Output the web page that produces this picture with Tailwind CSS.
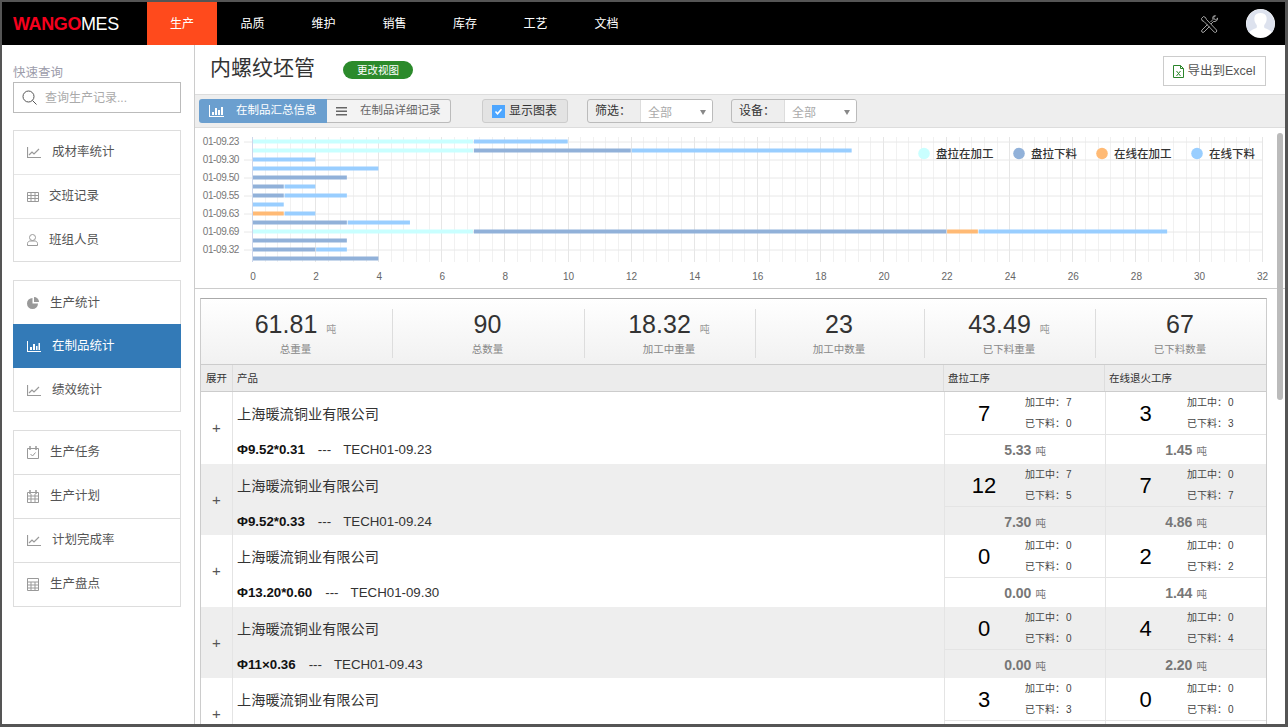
<!DOCTYPE html>
<html lang="en">
<head>
    <meta charset="UTF-8">
    <title>WANGOMES 在制品统计</title>
    <script src="https://cdn.jsdelivr.net/npm/@tailwindcss/browser@4"></script>
</head>
<body class="w-[1288px] h-[727px] overflow-hidden bg-white font-['Liberation_Sans','Noto_Sans_CJK_SC',sans-serif]">
<div class="w-[1288px] h-[727px] flex flex-col border-t-2 border-l-2 border-r-[3px] border-b-[3px] border-[#555]">

    <!-- top nav -->
    <header class="h-[43px] shrink-0 bg-black flex items-center text-white">
        <div class="w-[145px] pl-[11px] text-[18px] tracking-[-0.4px] leading-none"><span class="font-bold text-[#f5001d]">WANGO</span><span>MES</span></div>
        <nav class="flex h-full text-[12px]">
            <a class="w-[70px] flex items-center justify-center bg-[#ff4a1c]">生产</a>
            <a class="w-[71px] flex items-center justify-center">品质</a>
            <a class="w-[71px] flex items-center justify-center">维护</a>
            <a class="w-[71px] flex items-center justify-center">销售</a>
            <a class="w-[70px] flex items-center justify-center">库存</a>
            <a class="w-[71px] flex items-center justify-center">工艺</a>
            <a class="w-[71px] flex items-center justify-center">文档</a>
        </nav>
        <div class="ml-auto flex items-center">
            <svg class="w-[18px] h-[18px] mr-[28px]" viewBox="0 0 18 18" fill="none" stroke="#ccc" stroke-width="0.800">
                <path d="M1.500 3.500l2-2 2 1 1 2 10 10.500a1.600 1.600 0 0 1-2.200 2.200L4 6.500l-2-1z"/>
                <path d="M7.500 9.500l-5.500 5.500a1.400 1.400 0 0 0 2 2l5.500-5.500"/>
                <path d="M10.500 7l2.500-2.500a3.300 3.300 0 0 1 .5-3.500l2-.3-1.800 2 .6 1.500 1.500.6 2-1.800a3.500 3.500 0 0 1-4.300 3.500l-2.500 2.500"/>
            </svg>
            <svg class="w-[29px] h-[29px] mr-[10px]" viewBox="0 0 29 29">
                <circle cx="14.500" cy="14.500" r="14.500" fill="#fff"/>
                <path d="M3 23.500c-3-4-3.500-10-1.500-14C4 4 9 .3 14.500.3S25 4 27.500 9.500c2 4 1.500 10-1.500 14-1.500-2.500-5-3.500-7.500-4.500-.5-1-.5-2-.2-3 2-2 2.700-5 2.200-8C20 5.500 17.500 4 14.500 4S9 5.500 8.500 8c-.5 3 .2 6 2.200 8 .3 1 .3 2-.2 3C8 20 4.500 21 3 23.500z" fill="#dde2ee"/>
            </svg>
        </div>
    </header>

    <div class="flex flex-1 min-h-0">
        <!-- sidebar -->
        <aside class="w-[193px] shrink-0 border-r border-[#ccc] pl-[11px] pr-[13px] text-[12.500px] text-[#555]">
            <p class="mt-[20px] h-[17px] leading-[17px] text-[#9d9dab]">快速查询</p>
            <div class="h-[31px] border border-[#bbb] flex items-center pl-[8px] text-[12px] text-[#aaa]">
                <svg class="w-[15px] h-[15px] mr-[8px]" viewBox="0 0 15 15" fill="none" stroke="#555" stroke-width="1"><circle cx="6.500" cy="6.500" r="5.500"/><path d="M10.500 10.500l4 4"/></svg>
                查询生产记录...
            </div>

            <ul class="mt-[17px] border border-[#ddd]">
                <li class="h-[44px] flex items-center pl-[13px] border-b border-[#e6e6e6]">
                    <svg class="w-[14px] h-[11px] mr-[11px]" viewBox="0 0 14 11" fill="none" stroke="#999" stroke-width="1.200"><path d="M.5 0v10.500H14"/><path d="M2 8l3-3 2 2 5-5"/></svg>成材率统计
                </li>
                <li class="h-[44px] flex items-center pl-[13px] border-b border-[#e6e6e6]">
                    <svg class="w-[12px] h-[10px] mr-[10px]" viewBox="0 0 12 10" fill="none" stroke="#999"><path d="M.5.5h11v9H.5zM.5 3.500h11M.5 6.500h11M4 .5v9M8 .5v9"/></svg>交班记录
                </li>
                <li class="h-[42px] flex items-center pl-[13px]">
                    <svg class="w-[11px] h-[12px] mr-[11px]" viewBox="0 0 11 12" fill="none" stroke="#999"><circle cx="5.500" cy="3.500" r="3"/><path d="M.5 11.500V9.500c0-1.500 1.500-2.500 2.500-2.500h5c1 0 2.500 1 2.500 2.500v2z"/></svg>班组人员
                </li>
            </ul>

            <ul class="mt-[18px] border border-[#ddd]">
                <li class="h-[43px] flex items-center pl-[13px] pt-px">
                    <svg class="w-[12px] h-[12px] mr-[11px]" viewBox="0 0 12 12" fill="#999"><path d="M5.500 1a5.500 5.500 0 1 0 5.500 5.500H5.500z"/><path d="M7 0a5 5 0 0 1 5 5H7z"/></svg>生产统计
                </li>
                <li class="h-[44px] flex items-center pl-[13px] pt-px -mx-px bg-[#337ab7] text-white">
                    <svg class="w-[14px] h-[11px] ml-px mr-[11px]" viewBox="0 0 14 11" fill="#fff"><path d="M0 0h1v10h13v1H0z"/><path d="M3 6h2v3H3zM6 3h2v6H6zM9 5h1.500v4H9zM11.500 2H13v7h-1.500z"/></svg>在制品统计
                </li>
                <li class="h-[43px] flex items-center pl-[13px] pt-px">
                    <svg class="w-[14px] h-[11px] mr-[11px]" viewBox="0 0 14 11" fill="none" stroke="#999" stroke-width="1.200"><path d="M.5 0v10.500H14"/><path d="M2 8l3-3 2 2 5-5"/></svg>绩效统计
                </li>
            </ul>

            <ul class="mt-[18px] border border-[#ddd]">
                <li class="h-[44px] flex items-center pl-[13px] border-b border-[#ddd]">
                    <svg class="w-[12px] h-[13px] mr-[11px]" viewBox="0 0 12 13" fill="none" stroke="#999"><path d="M.5 2.500h11v10H.5z"/><path d="M3 0v4M9 0v4" stroke-width="1.500"/><path d="M3.500 8l2 2 3-3.500"/></svg>生产任务
                </li>
                <li class="h-[44px] flex items-center pl-[13px] border-b border-[#ddd]">
                    <svg class="w-[12px] h-[13px] mr-[11px]" viewBox="0 0 12 13" fill="none" stroke="#999"><path d="M.5 2.500h11v10H.5zM.5 6h11M.5 9h11M4 4v8M8 4v8"/><path d="M3 0v4M9 0v4" stroke-width="1.500"/></svg>生产计划
                </li>
                <li class="h-[44px] flex items-center pl-[13px] border-b border-[#ddd]">
                    <svg class="w-[14px] h-[11px] mr-[11px]" viewBox="0 0 14 11" fill="none" stroke="#999" stroke-width="1.200"><path d="M.5 0v10.500H14"/><path d="M2 8l3-3 2 2 5-5"/></svg>计划完成率
                </li>
                <li class="h-[43px] flex items-center pl-[13px]">
                    <svg class="w-[12px] h-[13px] mr-[11px]" viewBox="0 0 12 13" fill="none" stroke="#999"><path d="M.5.5h11v12H.5zM.5 4h11M.5 7h11M.5 10h11M4 4v8M8 4v8"/></svg>生产盘点
                </li>
            </ul>
        </aside>

        <main class="relative flex-1 min-w-0 overflow-hidden flex flex-col">
            <!-- title row -->
            <div class="h-[49px] shrink-0 flex items-start pl-[15px] pr-[19px]">
                <h1 class="mt-[8px] text-[21px] leading-[30px] text-[#333]">内螺纹坯管</h1>
                <span class="mt-[16px] ml-[28px] w-[70px] h-[18px] rounded-full bg-[#2b8a2b] text-white text-[10.500px] leading-[18px] text-center">更改视图</span>
                <button class="ml-auto mt-[11px] w-[103px] h-[30px] border border-[#ccc] flex items-center justify-center text-[12.500px] text-[#555]">
                    <svg class="w-[11px] h-[13px] mr-[3px]" viewBox="0 0 11 13" fill="none" stroke="#2a852a"><path d="M.5.5h7l3 3v9H.5zM7.500.5v3h3"/><path d="M3.500 6l4 5M7.500 6l-4 5"/></svg>导出到Excel
                </button>
            </div>

            <!-- toolbar -->
            <div class="h-[34px] shrink-0 bg-[#eee] border-y border-[#ddd] flex items-start pl-[4px] pt-[4px] text-[12px]">
                <div class="flex h-[24px] text-[11.500px]">
                    <span class="w-[128px] rounded-l-[3px] bg-[#6b9fcf] text-white flex items-center pl-[10px]">
                        <svg class="w-[15px] h-[12px] mr-[12px]" viewBox="0 0 15 12" fill="#fff"><path d="M0 0h1v11h14v1H0z"/><path d="M3 7h2v3H3zM6 3h2v7H6zM9 5h2v5H9zM12 2h2v8h-2z"/></svg>在制品汇总信息
                    </span>
                    <span class="w-[124px] rounded-r-[3px] bg-[#f3f3f3] border border-l-0 border-[#bbb] text-[#666] flex items-center pl-[9px]">
                        <svg class="w-[11px] h-[9px] mr-[13px]" viewBox="0 0 11 9" fill="#666"><path d="M0 0h11v1.500H0zM0 3.500h11V5H0zM0 7h11v1.500H0z"/></svg>在制品详细记录
                    </span>
                </div>
                <label class="ml-[31px] w-[86px] h-[24px] bg-[#e3e3e3] border border-[#ccc] rounded-[3px] flex items-center pl-[9px] text-[#333]">
                    <svg class="w-[13px] h-[13px] mr-[4px]" viewBox="0 0 13 13"><path d="M0 0h13v13H0z" fill="#4da6ff"/><path d="M3.500 6.500l2 2.200 4-4.500" fill="none" stroke="#fff" stroke-width="1.600"/></svg>显示图表
                </label>
                <div class="ml-[19px] w-[126px] h-[24px] border border-[#bbb] rounded-[3px] flex overflow-hidden">
                    <span class="w-[53px] pl-[7px] flex items-center text-[#333] border-r border-[#ddd]">筛选：</span>
                    <span class="flex-1 bg-white flex items-center pl-[7px] pt-[3px] text-[#aaa]">全部<i class="ml-auto mr-[6px] border-x-[3.500px] border-x-transparent border-t-[5px] border-t-[#888]"></i></span>
                </div>
                <div class="ml-[18px] w-[126px] h-[24px] border border-[#bbb] rounded-[3px] flex overflow-hidden">
                    <span class="w-[53px] pl-[7px] flex items-center text-[#333] border-r border-[#ddd]">设备：</span>
                    <span class="flex-1 bg-white flex items-center pl-[7px] pt-[3px] text-[#aaa]">全部<i class="ml-auto mr-[6px] border-x-[3.500px] border-x-transparent border-t-[5px] border-t-[#888]"></i></span>
                </div>
            </div>

            <!-- chart, viewBox uses page coordinates -->
            <div class="h-[161px] shrink-0 border-b border-[#ccc]">
                <svg id="chart" class="block" width="1090" height="160" viewBox="195 128 1090 160"></svg>
            </div>

            <!-- summary table -->
            <section class="mt-[9px] ml-[5px] w-[1067px] shrink-0 border-x border-t border-x-[#ccc] border-t-[#aaa]">
                <div class="h-[65px] py-[10px] grid grid-cols-[192px_192px_171px_169px_171px_170px] bg-linear-to-b from-white to-[#f1f1f1] text-center">
                    <div class="pr-[2px] border-r border-[#ddd] flex flex-col items-center"><p class="h-[31px] leading-[31px] text-[25px] text-[#333]">61.81<span class="ml-[9px] text-[10px] text-[#999]">吨</span></p><p class="mt-[2px] text-[10.500px] text-[#888]">总重量</p></div>
                    <div class="pr-[2px] border-r border-[#ddd] flex flex-col items-center"><p class="h-[31px] leading-[31px] text-[25px] text-[#333]">90</p><p class="mt-[2px] text-[10.500px] text-[#888]">总数量</p></div>
                    <div class="pr-[2px] border-r border-[#ddd] flex flex-col items-center"><p class="h-[31px] leading-[31px] text-[25px] text-[#333]">18.32<span class="ml-[9px] text-[10px] text-[#999]">吨</span></p><p class="mt-[2px] text-[10.500px] text-[#888]">加工中重量</p></div>
                    <div class="pr-[2px] border-r border-[#ddd] flex flex-col items-center"><p class="h-[31px] leading-[31px] text-[25px] text-[#333]">23</p><p class="mt-[2px] text-[10.500px] text-[#888]">加工中数量</p></div>
                    <div class="pr-[2px] border-r border-[#ddd] flex flex-col items-center"><p class="h-[31px] leading-[31px] text-[25px] text-[#333]">43.49<span class="ml-[9px] text-[10px] text-[#999]">吨</span></p><p class="mt-[2px] text-[10.500px] text-[#888]">已下料重量</p></div>
                    <div class="pr-[2px] flex flex-col items-center"><p class="h-[31px] leading-[31px] text-[25px] text-[#333]">67</p><p class="mt-[2px] text-[10.500px] text-[#888]">已下料数量</p></div>
                </div>
                <div class="h-[28px] grid grid-cols-[32px_711px_161px_161px] bg-[#ececec] border-y border-[#ccc] text-[10.500px] text-[#333] leading-[26px]">
                    <span class="pl-[5px] border-r border-[#ddd]">展开</span>
                    <span class="pl-[4px] border-r border-[#ddd]">产品</span>
                    <span class="pl-[4px] border-r border-[#ddd]">盘拉工序</span>
                    <span class="pl-[4px]">在线退火工序</span>
                </div>
                <div id="rows"></div>
            </section>

            <!-- scrollbar -->
            <div class="absolute left-[1082px] top-[88px] w-[6px] h-[267px] rounded-full bg-[#bbb]"></div>
        </main>
    </div>
</div>

<script>
    const NS = 'http://www.w3.org/2000/svg';
    const chart = document.getElementById('chart');
    const X0 = 253, UNIT = 31.55;
    const COLORS = { a: '#c9ffff', b: '#91b1d9', c: '#ffba75', d: '#99ceff' };

    function add(tag, attrs, text) {
        const el = document.createElementNS(NS, tag);
        for (const k in attrs) el.setAttribute(k, attrs[k]);
        if (text) el.textContent = text;
        chart.appendChild(el);
        return el;
    }

    // grid
    for (let i = 0; i <= 80; i++) {
        const x = Math.round(X0 + i * 0.4 * UNIT) - 0.5;
        add('line', { x1: x, x2: x, y1: 137, y2: 262, stroke: i % 5 === 0 ? '#e6e6e6' : '#f1f1f1', 'stroke-width': 1 });
    }
    const labels = ['01-09.23', '01-09.30', '01-09.50', '01-09.55', '01-09.63', '01-09.69', '01-09.32'];
    labels.forEach((t, i) => {
        const y = 141.5 + i * 18;
        add('line', { x1: 244, x2: 1262, y1: y + 0.5, y2: y + 0.5, stroke: '#e8e8e8' });
        add('text', { x: 239, y: y + 3.5, 'text-anchor': 'end', 'font-size': 10, 'letter-spacing': -0.4, fill: '#777' }, t);
    });
    add('line', { x1: 252.5, x2: 252.5, y1: 137, y2: 262, stroke: '#ccd6eb' });
    for (let i = 0; i <= 32; i += 2) {
        add('text', { x: X0 + i * UNIT, y: 280, 'text-anchor': 'middle', 'font-size': 10, fill: '#666' }, String(i));
    }

    // stacked bars: [color, from, to] per row
    const bars = [
        [['a', 0, 7], ['d', 7, 10]],
        [['a', 0, 7], ['b', 7, 12], ['d', 12, 19]],
        [['d', 0, 2]],
        [['d', 0, 4]],
        [['b', 0, 3]],
        [['b', 0, 1], ['d', 1, 2]],
        [['b', 0, 1], ['d', 1, 3]],
        [['d', 0, 1]],
        [['c', 0, 1], ['d', 1, 2]],
        [['b', 0, 3], ['d', 3, 5]],
        [['a', 0, 7], ['b', 7, 22], ['c', 22, 23], ['d', 23, 29]],
        [['b', 0, 3]],
        [['b', 0, 2], ['d', 2, 3]],
        [['b', 0, 4]]
    ];
    bars.forEach((row, i) => {
        row.forEach(([c, from, to]) => {
            add('rect', { x: X0 + from * UNIT, y: 139.5 + i * 9, width: (to - from) * UNIT - 0.8, height: 4, fill: COLORS[c] });
        });
    });

    // legend
    [[924, 'a', '盘拉在加工'], [1019, 'b', '盘拉下料'], [1102, 'c', '在线在加工'], [1197, 'd', '在线下料']].forEach(([x, c, t]) => {
        add('circle', { cx: x, cy: 153.5, r: 5.8, fill: COLORS[c] });
        add('text', { x: x + 12, y: 158, 'font-size': 11.5, 'font-weight': 500, fill: '#333' }, t);
    });

    // table rows, the last one runs off the bottom of the window
    const rows = [
        ['Φ9.52*0.31', 'TECH01-09.23', [7, 7, 0, '5.33'], [3, 0, 3, '1.45']],
        ['Φ9.52*0.33', 'TECH01-09.24', [12, 7, 5, '7.30'], [7, 0, 7, '4.86']],
        ['Φ13.20*0.60', 'TECH01-09.30', [0, 0, 0, '0.00'], [2, 0, 2, '1.44']],
        ['Φ11×0.36', 'TECH01-09.43', [0, 0, 0, '0.00'], [4, 0, 4, '2.20']],
        [null, null, [3, 0, 3, null], [0, 0, 0, null]]
    ];

    function procCell(p, numWidth) {
        const weight = p[3] ? `<b class="text-[14px]">${p[3]}</b><span class="ml-[4px] text-[10.500px]">吨</span>` : '';
        return `
            <div class="flex flex-col border-l border-[#e4e4e4]">
                <div class="h-[43px] flex border-b border-[#e4e4e4] text-[10px] text-[#444]">
                    <span class="${numWidth} mr-[2px] text-center text-[22px] leading-[43px] text-black">${p[0]}</span>
                    <div class="leading-[21px] whitespace-nowrap"><p>加工中：<span class="ml-px">${p[1]}</span></p><p>已下料：<span class="ml-px">${p[2]}</span></p></div>
                </div>
                <div class="flex-1 flex items-baseline justify-center pt-[5px] text-[#777]">${weight}</div>
            </div>`;
    }

    document.getElementById('rows').innerHTML = rows.map((r, i) => `
        <div class="h-[71.500px] grid grid-cols-[32px_711px_161px_161px] overflow-hidden ${i % 2 ? 'bg-[#eee]' : 'bg-white'}">
            <div class="flex items-center justify-center pt-px text-[15px] text-[#555] border-r border-[#e4e4e4]">+</div>
            <div class="pl-[4px] pt-[12px] text-[#333]">
                <p class="text-[14.200px] leading-[20px]">上海暖流铜业有限公司</p>
                ${r[0] ? `<p class="mt-[16px] text-[13.300px] leading-[20px]"><b class="text-[#111]">${r[0]}</b><span class="ml-[13px]">---</span><span class="ml-[12px]">${r[1]}</span></p>` : ''}
            </div>
            ${procCell(r[2], 'w-[78px]')}
            ${procCell(r[3], 'w-[79px]')}
        </div>`).join('');
</script>
</body>
</html>
